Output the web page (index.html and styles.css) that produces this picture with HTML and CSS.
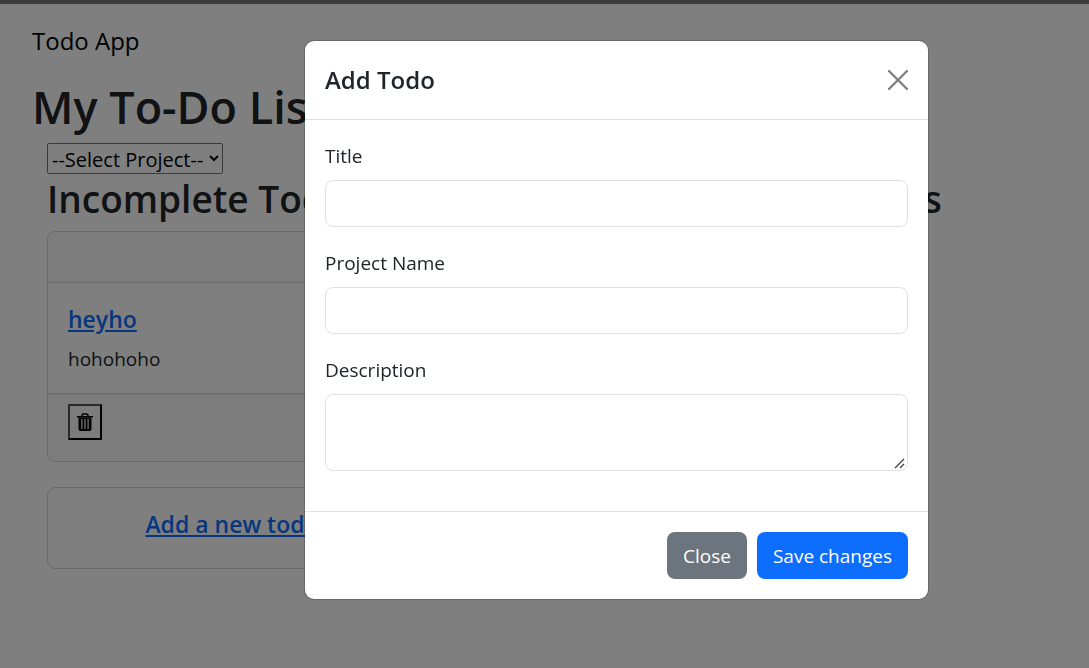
FILE: index.html
```
<!DOCTYPE html>
<html lang="en">
<head>
<meta charset="utf-8">
<meta name="viewport" content="width=device-width, initial-scale=1">
<title>Todo App</title>
<link rel="stylesheet" href="styles.css">
</head>
<body>
<nav class="navbar"><a class="navbar-brand" href="#">Todo App</a></nav>
<main class="page">
  <h1 class="page-title">My To-Do List</h1>
  <div class="content">
    <select class="project-select" aria-label="Project">
      <option>--Select Project--</option>
    </select>
    <div class="columns">
      <section class="column">
        <h2 class="column-title">Incomplete Todos</h2>
        <article class="card">
          <div class="card-header"></div>
          <div class="card-body">
            <h3 class="card-title"><a href="#">heyho</a></h3>
            <p class="card-text">hohohoho</p>
          </div>
          <div class="card-footer">
            <button class="delete-button" type="button" aria-label="Delete">
              <svg class="trash-icon" viewBox="0 0 16 18" aria-hidden="true">
                <path d="M5 3V2.5Q5 1 6.5 1h3Q11 1 11 2.5V3" fill="none" stroke="currentColor" stroke-width="1.5"/>
                <path d="M0 3h16v1.5H0z"/>
                <path fill-rule="evenodd" d="M1.5 4.5h13v11.5q0 2-2 2h-9q-2 0-2-2zM4.3 6v10h1.2v-10zM7.4 6v10h1.2v-10zM10.5 6v10h1.2v-10z"/>
              </svg>
            </button>
          </div>
        </article>
        <article class="card card-add">
          <h3 class="card-title"><a href="#">Add a new todo</a></h3>
        </article>
      </section>
      <section class="column">
        <h2 class="column-title">Completed Todos</h2>
      </section>
    </div>
  </div>
</main>
<div class="backdrop">
  <form class="modal" role="dialog" aria-modal="true" aria-labelledby="modal-title">
    <header class="modal-header">
      <h2 class="modal-title" id="modal-title">Add Todo</h2>
      <button class="close-button" type="button" aria-label="Close dialog">
        <svg class="close-icon" viewBox="0 0 20 20" aria-hidden="true"><path d="M1 1l18 18M19 1L1 19" fill="none" stroke="currentColor" stroke-width="2.4" stroke-linecap="round"/></svg>
      </button>
    </header>
    <div class="modal-body">
      <div class="field">
        <label for="title">Title</label>
        <input class="control" id="title" type="text">
      </div>
      <div class="field">
        <label for="project">Project Name</label>
        <input class="control" id="project" type="text">
      </div>
      <div class="field">
        <label for="description">Description</label>
        <textarea class="control control-area" id="description"></textarea>
      </div>
    </div>
    <footer class="modal-footer">
      <button class="button button-secondary" type="button">Close</button>
      <button class="button button-primary" type="button">Save changes</button>
    </footer>
  </form>
</div>
</body>
</html>
```
FILE: styles.css
```
* { box-sizing: border-box; }
html, body { min-height: 100%; }
body {
  margin: 0;
  overflow: hidden;
  background: #fff;
  color: #212529;
  font: 19px/30px "Segoe UI", "Open Sans", sans-serif;
}
h1, h2, h3, p { margin: 0; }
h1, h2, h3 { font-weight: 600; }
a { color: #0d6efd; }
button, input, textarea, select { font: inherit; }

.navbar {
  border-top: 4px solid #7b7777;
  padding: 18px 32px;
}
.navbar-brand {
  display: block;
  color: #000;
  font-size: 24px;
  line-height: 38px;
  text-decoration: none;
}
.page { padding: 0 32px; }
.page-title { font-size: 45px; line-height: 58px; }
.content { padding: 7px 15px 0; }
.project-select {
  display: block;
  width: 176px;
  height: 31px;
  padding: 1px 0 0;
  border: 1px solid #767676;
  border-radius: 2px;
  background: #fff;
  color: #000;
  font-size: 20px;
}
.columns {
  display: grid;
  grid-template-columns: 370px 1fr;
  column-gap: 213px;
}
.column-title {
  padding-bottom: 7px;
  font-size: 37px;
  line-height: 50px;
  white-space: nowrap;
}
.card {
  margin-bottom: 25px;
  border: 1px solid #d2d2d2;
  border-radius: 8px;
}
.card-header {
  height: 51px;
  border-bottom: 1px solid #d2d2d2;
  background: #f8f8f8;
  border-radius: 7px 7px 0 0;
}
.card-body { padding: 20px 20px 19px; }
.card-title {
  margin-bottom: 8px;
  font-size: 23px;
  line-height: 33px;
}
.card-footer {
  padding: 10px 20px 21px;
  border-top: 1px solid #d2d2d2;
  background: #f8f8f8;
  border-radius: 0 0 7px 7px;
}
.delete-button {
  display: grid;
  place-items: center;
  width: 34px;
  height: 36px;
  padding: 0;
  border: 2px outset #000;
  background: transparent;
  color: #000;
}
.trash-icon { width: 16px; height: 18px; fill: currentColor; }
.card-add { padding: 20px 20px 19px; text-align: center; }

.backdrop {
  position: fixed;
  inset: 0;
  display: flex;
  align-items: flex-start;
  justify-content: center;
  padding: 40px 0 0 144px;
  background: rgba(0, 0, 0, 0.5);
}
.modal {
  width: 100%;
  max-width: 625px;
  border: 1px solid rgba(0, 0, 0, 0.18);
  border-radius: 10px;
  background: #fff;
  background-clip: padding-box;
}
.modal-header {
  display: flex;
  align-items: center;
  justify-content: space-between;
  padding: 20px;
  border-bottom: 1px solid #dee2e6;
}
.modal-title { font-size: 24px; line-height: 38px; }
.close-button {
  display: grid;
  padding: 0;
  border: 0;
  background: transparent;
  color: #808080;
}
.close-icon { width: 20px; height: 20px; }
.modal-body { padding: 21px 20px 20px; }
.field { display: grid; gap: 9px; margin-bottom: 21px; }
.field:last-child { margin-bottom: 20px; }
.control {
  width: 100%;
  height: 47px;
  padding: 7px 15px;
  border: 1px solid #dee2e6;
  border-radius: 8px;
  background: #fff;
  color: #212529;
}
.control-area { height: 77px; resize: vertical; }
.control-area::-webkit-resizer {
  background: url("data:image/svg+xml,%3Csvg xmlns='http://www.w3.org/2000/svg' viewBox='0 0 15 15'%3E%3Cpath d='M3 13L12 4M8 13L12 9' stroke='%23444' stroke-width='1.4'/%3E%3C/svg%3E") center / 100% no-repeat;
}
.modal-footer {
  display: flex;
  justify-content: flex-end;
  gap: 10px;
  padding: 20px;
  border-top: 1px solid #dee2e6;
}
.button {
  height: 47px;
  padding: 0 16px;
  border: 0;
  border-radius: 8px;
  color: #fff;
}
.button-secondary { background: #6c757d; }
.button-primary { background: #0d6efd; }
```
